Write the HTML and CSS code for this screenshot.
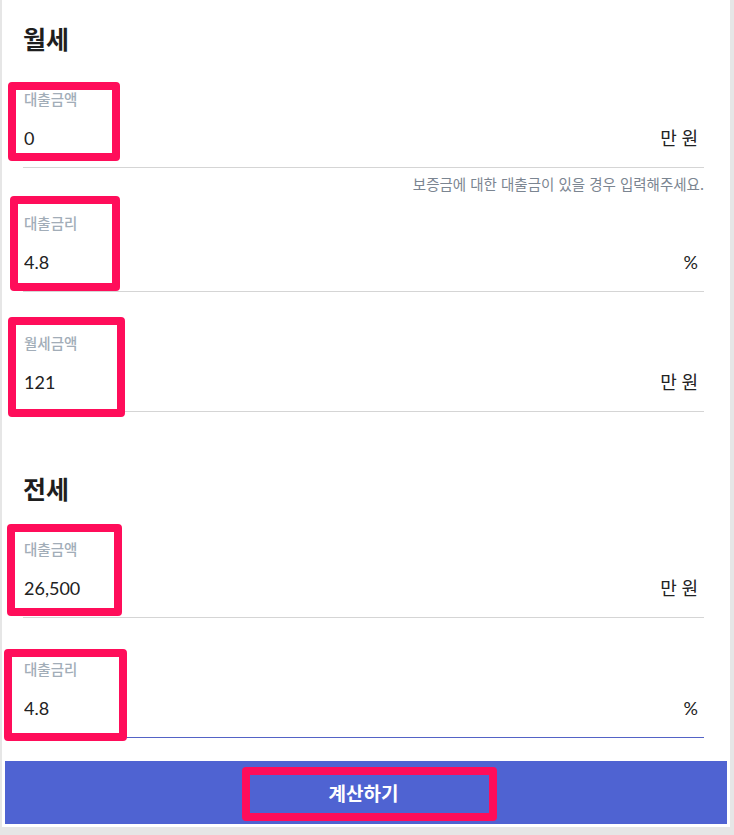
FILE: index.html
```html
<!DOCTYPE html>
<html lang="ko">
<head>
<meta charset="utf-8">
<title>월세 / 전세 계산</title>
<link rel="stylesheet" href="styles.css">
</head>
<body>
<div class="page">
  <div class="content">
    <section class="section">
      <h2 class="section-title">월세</h2>
      <div class="field">
        <label class="field-label">대출금액</label>
        <div class="field-row"><input class="field-input" value="0"><span class="field-unit">만 원</span></div>
      </div>
      <p class="field-hint">보증금에 대한 대출금이 있을 경우 입력해주세요.</p>
      <div class="field field--after-hint">
        <label class="field-label">대출금리</label>
        <div class="field-row"><input class="field-input" value="4.8"><span class="field-unit">%</span></div>
      </div>
      <div class="field">
        <label class="field-label">월세금액</label>
        <div class="field-row"><input class="field-input" value="121"><span class="field-unit">만 원</span></div>
      </div>
    </section>
    <section class="section">
      <h2 class="section-title">전세</h2>
      <div class="field">
        <label class="field-label">대출금액</label>
        <div class="field-row"><input class="field-input" value="26,500"><span class="field-unit">만 원</span></div>
      </div>
      <div class="field field--focus">
        <label class="field-label">대출금리</label>
        <div class="field-row"><input class="field-input" value="4.8"><span class="field-unit">%</span></div>
      </div>
    </section>
  </div>
  <button class="submit">계산하기</button>
</div>
<div class="marks">
  <div class="mark mark-1"></div>
  <div class="mark mark-2"></div>
  <div class="mark mark-3"></div>
  <div class="mark mark-4"></div>
  <div class="mark mark-5"></div>
  <div class="mark mark-6"></div>
</div>
</body>
</html>
```
FILE: styles.css
```css
html, body {
  margin: 0;
  padding: 0;
}
body {
  background: #e6e6e6;
  font-family: Lato, "Noto Sans CJK KR", sans-serif;
  color: #222;
  position: relative;
  min-height: 835px;
}
.page {
  margin-left: 2px;
  width: 728px;
  box-sizing: border-box;
  background: #fff;
  padding: 0 3px 3px;
}
.content {
  padding: 0 23px 0 18px;
}
.section + .section {
  margin-top: 38px;
}
.section-title {
  margin: 0;
  padding-top: 29px;
  padding-bottom: 1px;
  font-family: "Noto Sans CJK KR", sans-serif;
  font-size: 25px;
  font-weight: 700;
  line-height: 18px;
  color: #1e1e1e;
}
.field {
  padding-top: 41px;
  padding-bottom: 16px;
  border-bottom: 1px solid #d5d5d5;
}
.field--after-hint {
  padding-top: 19px;
}
.field--focus {
  border-bottom-color: #5363c6;
}
.field-label {
  display: block;
  margin-bottom: 16px;
  padding-left: 1px;
  font-family: "Noto Sans CJK KR", sans-serif;
  font-size: 14.5px;
  font-weight: 500;
  line-height: 18px;
  padding-top: 1px;
  padding-bottom: 1px;
  color: #a2adb8;
}
.field-row {
  display: flex;
  align-items: center;
  height: 26px;
  padding-right: 6px;
}
.field-input {
  flex: 1;
  min-width: 0;
  border: 0;
  outline: none;
  background: transparent;
  padding: 0 0 0 1px;
  margin: 0;
  height: 26px;
  font-family: Lato, sans-serif;
  font-size: 18px;
  line-height: 26px;
  color: #222;
}
.field-unit {
  font-family: Lato, "Noto Sans CJK KR", sans-serif;
  font-size: 18px;
  line-height: 26px;
  color: #222;
}
.field-hint {
  margin: 6px 0 0;
  text-align: right;
  font-family: "Noto Sans CJK KR", sans-serif;
  font-size: 14.5px;
  line-height: 20px;
  color: #7b8591;
}
.submit {
  display: block;
  width: 100%;
  height: 63px;
  margin-top: 23px;
  border: 0;
  padding: 0 5px 0 0;
  background: #4f63d2;
  color: #fff;
  font-family: "Noto Sans CJK KR", sans-serif;
  font-size: 19px;
  font-weight: 700;
  cursor: pointer;
}
.marks {
  position: absolute;
  top: 0;
  left: 0;
  width: 0;
  height: 0;
}
.mark {
  position: absolute;
  box-sizing: border-box;
  border: 8px solid #ff0d5a;
  border-radius: 4px;
}
.mark-1 { left: 8px; top: 82px; width: 112px; height: 79px; }
.mark-2 { left: 10px; top: 196px; width: 110px; height: 95px; }
.mark-3 { left: 8px; top: 317px; width: 117px; height: 100px; }
.mark-4 { left: 7px; top: 524px; width: 115px; height: 92px; }
.mark-5 { left: 4px; top: 649px; width: 123px; height: 92px; }
.mark-6 { left: 242px; top: 767px; width: 255px; height: 54px; }
```
